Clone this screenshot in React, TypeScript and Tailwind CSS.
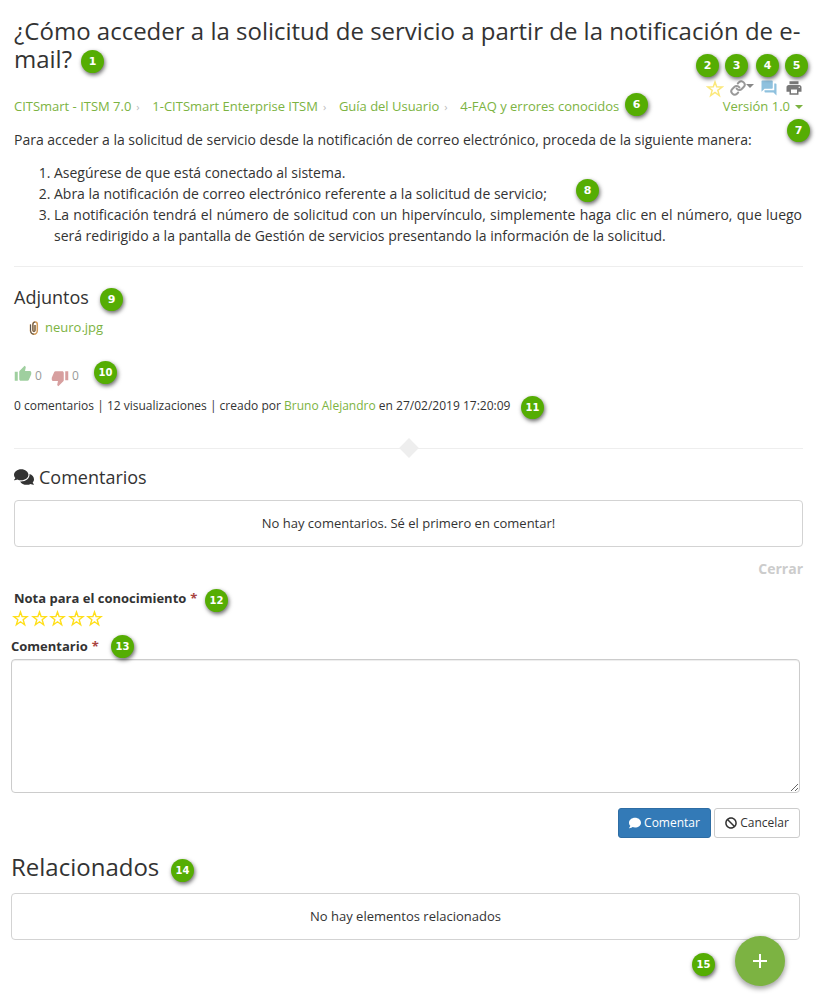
import React from "react";
import { MdForum, MdPrint, MdThumbUp, MdThumbDown, MdAdd } from "react-icons/md";
import { FaComments, FaComment, FaBan } from "react-icons/fa";
import { FiLink } from "react-icons/fi";

type BadgeProps = { n: number; at: string };

/** Numbered callout that floats over the page. */
function Badge({ n, at }: BadgeProps) {
  return (
    <span
      className={`absolute flex h-[23px] w-[23px] items-center justify-center rounded-full bg-[#55ad03] font-['DejaVu_Sans',sans-serif] font-bold leading-none text-white shadow-[1px_2px_4px_0px_rgba(0,0,0,0.6)] ${n > 9 ? "text-[10px]" : "text-[11px]"} ${at}`}
    >
      {n}
    </span>
  );
}

const badges: BadgeProps[] = [
  { n: 1, at: "left-[81px] top-[50px]" },
  { n: 2, at: "left-[696px] top-[54px]" },
  { n: 3, at: "left-[725px] top-[54px]" },
  { n: 4, at: "left-[756px] top-[54px]" },
  { n: 5, at: "left-[785px] top-[54px]" },
  { n: 6, at: "left-[625px] top-[93px]" },
  { n: 7, at: "left-[787px] top-[119px]" },
  { n: 8, at: "left-[576px] top-[179px]" },
  { n: 9, at: "left-[100px] top-[288px]" },
  { n: 10, at: "left-[94px] top-[361px]" },
  { n: 11, at: "left-[521px] top-[396px]" },
  { n: 12, at: "left-[205px] top-[589px]" },
  { n: 13, at: "left-[111px] top-[635px]" },
  { n: 14, at: "left-[171px] top-[859px]" },
  { n: 15, at: "left-[692px] top-[953px]" },
];

const crumbs = ["CITSmart - ITSM 7.0", "1-CITSmart Enterprise ITSM", "Guía del Usuario", "4-FAQ y errores conocidos"];

function Caret() {
  return <span className="inline-block border-x-4 border-t-4 border-x-transparent border-t-current" />;
}

/** Outlined five-pointed star with sharp tips. */
function Star({ className }: { className: string }) {
  return (
    <svg viewBox="0 0 16 16" fill="none" stroke="currentColor" strokeWidth="1.3" className={className}>
      <path d="M8 1.8 9.5 6.1 14.3 6.2 10.5 9.2 11.9 13.9 8 11.1 4.1 13.9 5.5 9.2 1.7 6.2 6.5 6.1Z" />
    </svg>
  );
}

/** Upright paper clip. */
function Clip() {
  return (
    <svg viewBox="0 0 10 14" fill="none" className="h-[14px] w-[10px]">
      <path d="M1.5 3.5V9.8A3.4 3.4 0 0 0 8.3 9.8V3.2A2.2 2.2 0 0 0 3.9 3.2V9.4A1 1 0 0 0 6 9.4V4" stroke="#d39a55" strokeWidth="1.5" />
      <path d="M1.5 3.5V9.8A3.4 3.4 0 0 0 4.9 13.2M3.9 3.2V9.4A1 1 0 0 0 6 9.4V4M3.9 3.2A2.2 2.2 0 0 1 6.1 1" stroke="#555" strokeWidth="1" />
    </svg>
  );
}

export default function App() {
  return (
    <div className="relative h-[994px] w-[817px] overflow-hidden bg-white font-['Open_Sans',sans-serif] text-[13px] text-[#333]">
      <main className="flex flex-col pl-[14px] pr-[14px]">
        <h1 className="mt-[17px] h-[57px] whitespace-nowrap text-[24px] leading-[28px]">
          ¿Cómo acceder a la solicitud de servicio a partir de la notificación de e-
          <br />
          mail?
        </h1>

        <div className="mt-[6px] flex h-[16px] items-center justify-end">
          <Star className="mr-[6px] mt-[2px] size-[18px] text-[#fbe87a]" />
          <FiLink className="mt-[-1px] size-[16px] stroke-[3] text-[#999]" />
          <span className="mb-[4px] mr-[6px] flex text-[#888]">
            <Caret />
          </span>
          <MdForum className="mr-[7px] size-[18px] text-[#8fc1de]" />
          <MdPrint className="size-[18px] text-[#777]" />
        </div>

        <div className="mt-[1px] flex h-[20px] items-center justify-between whitespace-nowrap text-[#7cb342]">
          <nav className="flex items-center tracking-[-0.01px]">
            {crumbs.map((c, i) => (
              <React.Fragment key={c}>
                {i > 0 && <span className="w-[21px] pl-[5px] text-[11px] text-[#bbb]">›</span>}
                <a>{c}</a>
              </React.Fragment>
            ))}
          </nav>
          <a className="flex items-center gap-[5px]">
            Versión 1.0 <Caret />
          </a>
        </div>

        <p className="mt-[12px] h-[21px] whitespace-nowrap text-[14px] leading-[21px] tracking-[-0.01px]">
          Para acceder a la solicitud de servicio desde la notificación de correo electrónico, proceda de la siguiente manera:
        </p>
        <ol className="mt-[12px] h-[84px] w-[788px] list-decimal whitespace-nowrap pl-[40px] text-[14px] leading-[21px] tracking-[-0.01px]">
          <li>Asegúrese de que está conectado al sistema.</li>
          <li>Abra la notificación de correo electrónico referente a la solicitud de servicio;</li>
          <li className="whitespace-normal text-justify">
            La notificación tendrá el número de solicitud con un hipervínculo, simplemente haga clic en el número, que luego
            será redirigido a la pantalla de Gestión de servicios presentando la información de la solicitud.
          </li>
        </ol>

        <hr className="mt-[20px] border-[#eee]" />

        <h2 className="mt-[19px] h-[22px] text-[18px] leading-[22px]">Adjuntos</h2>
        <div className="mt-[10px] flex h-[20px] items-center gap-[6px] pl-[15px]">
          <Clip />
          <a className="text-[#7cb342]">neuro.jpg</a>
        </div>

        <div className="mt-[25px] flex h-[22px] items-center text-[12px] text-[#999]">
          <MdThumbUp className="size-[18px] text-[#9fcf9f]" />
          <span className="ml-[3px] mt-[3px]">0</span>
          <MdThumbDown className="ml-[9px] mt-[8px] size-[18px] text-[#d79f9f]" />
          <span className="ml-[3px] mt-[3px]">0</span>
        </div>

        <p className="mt-[12px] flex h-[18px] items-center whitespace-pre text-[12px] tracking-[0.006px]">
          0 comentarios | 12 visualizaciones | creado por <a className="text-[#7cb342]">Bruno Alejandro</a> en 27/02/2019 17:20:09
        </p>

        <div className="mt-[23px] flex h-[20px] items-center">
          <span className="h-px flex-1 bg-[#eee]" />
          <span className="size-[14px] rotate-45 bg-[#eee]" />
          <span className="h-px flex-1 bg-[#eee]" />
        </div>

        <h2 className="mt-[7px] flex h-[24px] items-center gap-[5px] text-[18px]">
          <FaComments className="size-[20px]" />
          Comentarios
        </h2>
        <div className="mt-[11px] flex h-[47px] items-center justify-center rounded-[4px] border border-[#d3d3d3]">
          No hay comentarios. Sé el primero en comentar!
        </div>
        <div className="mt-[11px] flex h-[20px] items-center justify-end text-[14px] font-bold text-[#ccc]">Cerrar</div>

        <label className="mt-[11px] flex h-[20px] items-center gap-[4px] font-bold">
          Nota para el conocimiento <span className="text-[#a94442]">*</span>
        </label>
        <div className="ml-[-2px] flex h-[18px] items-center gap-[1.5px]">
          {[0, 1, 2, 3, 4].map((i) => (
            <Star key={i} className="size-[17px] text-[#ffdf1a]" />
          ))}
        </div>
      </main>

      <section className="flex flex-col pl-[11px] pr-[17px]">
        <label className="mt-[10px] flex h-[20px] items-center gap-[4px] font-bold">
          Comentario <span className="text-[#a94442]">*</span>
        </label>
        <textarea className="mt-[2px] block h-[134px] w-full resize rounded-[4px] border border-[#ccc] shadow-[inset_0_1px_1px_rgba(0,0,0,0.075)]" />
        <div className="mt-[15px] flex h-[30px] justify-end gap-[3px] text-[12px]">
          <button className="flex w-[93px] items-center justify-center gap-[3px] rounded-[3px] border border-[#2e6da4] bg-[#337ab7] text-white">
            <FaComment className="size-[12px]" />
            Comentar
          </button>
          <button className="flex w-[86px] items-center justify-center gap-[3px] rounded-[3px] border border-[#ccc] bg-white">
            <FaBan className="size-[12px]" />
            Cancelar
          </button>
        </div>

        <h1 className="mt-[13px] h-[32px] text-[24px] leading-[32px]">Relacionados</h1>
        <div className="mt-[10px] flex h-[47px] items-center justify-center rounded-[4px] border border-[#d3d3d3]">
          No hay elementos relacionados
        </div>
      </section>

      <button className="absolute left-[735px] top-[936px] flex size-[50px] items-center justify-center rounded-full bg-[#7cb342] text-white shadow-[0_2px_5px_1px_rgba(0,0,0,0.35)]">
        <MdAdd className="size-[24px]" />
      </button>

      {badges.map((b) => (
        <Badge key={b.n} {...b} />
      ))}
    </div>
  );
}
